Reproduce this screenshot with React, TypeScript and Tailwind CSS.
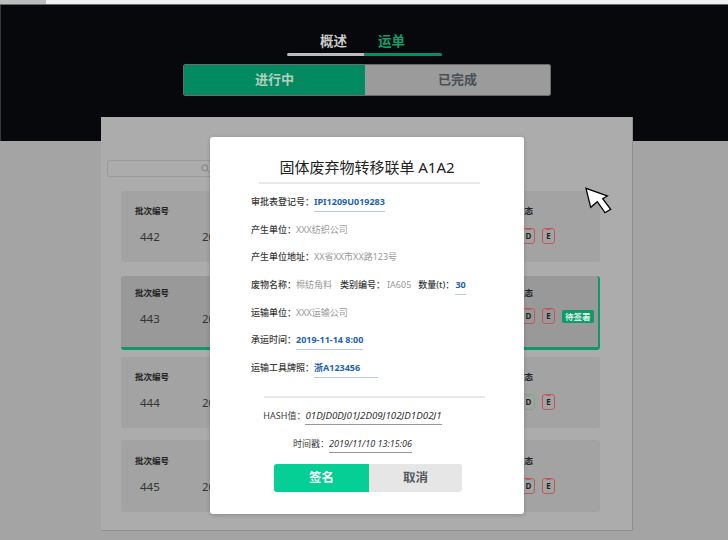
import React from "react";

type BoxProps = { letter: string; color: string };
function ClipBox({ letter, color }: BoxProps) {
  return (
    <div
      className="relative w-[13px] h-[16px] rounded-[3px] border flex items-center justify-center text-[8px] font-bold text-[#222] leading-none"
      style={{ borderColor: color }}
    >
      <span className="absolute -top-[1px] left-[3px] w-[5px] h-[2px] rounded-[1px]" style={{ backgroundColor: color }} />
      {letter}
    </div>
  );
}

type CardProps = {
  num: string;
  active?: boolean;
  labelPt: string;
  numMt: string;
  boxMt: string;
  h: string;
  mt: string;
  dGreen?: boolean;
};

function Card({ num, active, labelPt, numMt, boxMt, h, mt, dGreen }: CardProps) {
  const red = "#c0585a";
  const green = "#7fa982";
  return (
    <div
      className={`${mt} ${h} ml-[20px] w-[479px] rounded-[3px] flex ${
        active ? "bg-[#999999] border-r-2 border-b-[3px] border-[#0c9a69]" : "bg-[#a3a3a3]"
      }`}
    >
      <div className={`w-[81px] pl-[14px] flex flex-col ${labelPt}`}>
        <div className="text-[8.5px] leading-[12px] font-bold text-[#222]">批次编号</div>
        <div className={`${numMt} pl-[5px] text-[11.5px] leading-[14px] text-[#333]`}>{num}</div>
      </div>
      <div className={`w-[260px] flex flex-col ${labelPt}`}>
        <div className="h-[12px]" />
        <div className={`${numMt} text-[11.5px] leading-[14px] text-[#333]`}>2019</div>
      </div>
      <div className={`flex-1 flex flex-col ${labelPt}`}>
        <div className="pl-[54px] text-[8.5px] leading-[12px] font-bold text-[#222]">状态</div>
        <div className={`${boxMt} flex items-center gap-[7px]`}>
          <ClipBox letter="A" color={green} />
          <ClipBox letter="B" color={green} />
          <ClipBox letter="C" color={green} />
          <ClipBox letter="D" color={dGreen ? green : red} />
          <ClipBox letter="E" color={red} />
          {active && (
            <div className="h-[13px] px-[3px] rounded-[2px] bg-[#0e9a69] text-[#d8eee5] text-[8.5px] leading-[13px] font-bold">
              待签署
            </div>
          )}
        </div>
      </div>
    </div>
  );
}

function Row({ children }: { children: React.ReactNode }) {
  return <div className="flex items-start h-[16px] text-[9px] leading-[12px] whitespace-nowrap">{children}</div>;
}

function Label({ children, className = "" }: { children: React.ReactNode; className?: string }) {
  return <span className={`font-medium text-[#3a3a3a] ${className}`}>{children}</span>;
}

function Plain({ children, className = "" }: { children: React.ReactNode; className?: string }) {
  return <span className={`text-[#9a9a9a] ${className}`}>{children}</span>;
}

function Blue({ children }: { children: React.ReactNode }) {
  return (
    <span className="font-bold text-[#1f62ad] pb-[3px] border-b-[1.5px] border-[#b9cbe3] leading-[12px]">{children}</span>
  );
}

export default function App() {
  return (
    <div className="relative w-[728px] h-[540px] overflow-hidden bg-[#a4a4a4] flex flex-col font-['Noto_Sans','Noto_Sans_CJK_SC',sans-serif]">
      {/* top strip */}
      <div className="h-[5px] flex shrink-0 border-b border-[#6b6b6b]">
        <div className="w-[46px] bg-[#bdbdbd]" />
        <div className="flex-1 bg-[#f1f1f1]" />
      </div>

      {/* dark header */}
      <div className="h-[136px] shrink-0 bg-[#07080b] flex flex-col border-l border-[#3a3a3a]">
        <div className="ml-[286px] w-[155px] flex flex-col mt-[27px]">
          <div className="flex pl-[33px] gap-[31px] text-[13.5px] leading-[18px] font-bold">
            <span className="text-[#c9c9c9]">概述</span>
            <span className="text-[#0f9e6e]">运单</span>
          </div>
          <div className="mt-[3px] h-[3px] flex rounded-full overflow-hidden">
            <div className="w-[77px] bg-[#bcbcbc]" />
            <div className="flex-1 bg-[#0a8c63]" />
          </div>
        </div>
        <div className="ml-[182px] mt-[8px] w-[368px] h-[32px] flex rounded-[2px] overflow-hidden border border-[#6a6a6a]">
          <div className="w-[181px] bg-[#038a60] flex items-center justify-center text-[13px] font-bold text-[#b3cfc2]">
            进行中
          </div>
          <div className="flex-1 bg-[#9b9b9b] flex items-center justify-center text-[13px] font-bold text-[#4a5058]">
            已完成
          </div>
        </div>
      </div>

      {/* panel */}
      <div className="relative -mt-[24px] ml-[101px] w-[532px] h-[414px] bg-[#acacac] border-r border-b border-[#8f8f8f] flex flex-col">
        <div className="mt-[43px] ml-[6px] w-[150px] h-[17px] rounded-[3px] border border-[#999] flex items-center">
          <svg className="ml-[93px]" width="9" height="9" viewBox="0 0 10 10" fill="none" stroke="#8a8a8a" strokeWidth="1.2">
            <circle cx="4.2" cy="4.2" r="3.2" />
            <line x1="6.6" y1="6.6" x2="9.2" y2="9.2" />
          </svg>
        </div>
        <Card num="442" labelPt="pt-[14px]" numMt="mt-[13px]" boxMt="mt-[11px]" h="h-[71px]" mt="mt-[14px]" />
        <Card num="443" active labelPt="pt-[11px]" numMt="mt-[13px]" boxMt="mt-[9px]" h="h-[74px]" mt="mt-[14px]" />
        <Card num="444" dGreen labelPt="pt-[14px]" numMt="mt-[13px]" boxMt="mt-[11px]" h="h-[71px]" mt="mt-[7px]" />
        <Card num="445" labelPt="pt-[15px]" numMt="mt-[13px]" boxMt="mt-[11px]" h="h-[72px]" mt="mt-[12px]" />
      </div>

      {/* modal */}
      <div className="absolute left-[210px] top-[137px] w-[314px] h-[377px] bg-white rounded-[3px] shadow-[0_1px_4px_rgba(0,0,0,0.2)] flex flex-col">
        <div className="pt-[20px] text-center text-[15px] leading-[20px] text-[#222]">固体废弃物转移联单 A1A2</div>
        <div className="mt-[5px] ml-[49px] w-[221px] h-[2px] bg-[#e9e9e9]" />
        <div className="ml-[41px] mt-[12px] flex flex-col gap-[11.7px]">
          <Row>
            <Label>审批表登记号：</Label>
            <Blue>IPI1209U019283</Blue>
          </Row>
          <Row>
            <Label>产生单位：</Label>
            <Plain>XXX纺织公司</Plain>
          </Row>
          <Row>
            <Label>产生单位地址：</Label>
            <Plain>XX省XX市XX路123号</Plain>
          </Row>
          <Row>
            <Label>废物名称：</Label>
            <Plain>棉纺角料</Plain>
            <Label className="ml-[8px]">类别编号：</Label>
            <Plain className="ml-[2px]">IA605</Plain>
            <Label className="ml-[7px]">数量(t)：</Label>
            <span className="ml-[1px]">
              <Blue>30</Blue>
            </span>
          </Row>
          <Row>
            <Label>运输单位：</Label>
            <Plain>XXX运输公司</Plain>
          </Row>
          <Row>
            <Label>承运时间：</Label>
            <Blue>2019-11-14 8:00</Blue>
          </Row>
          <Row>
            <Label>运输工具牌照：</Label>
            <span className="font-bold text-[#1f62ad] pb-[3px] pr-[18px] border-b-[1.5px] border-[#b9cbe3] leading-[12px]">
              浙A123456
            </span>
          </Row>
        </div>
        <div className="mt-[18px] ml-[54px] w-[221px] h-[2px] bg-[#e9e9e9]" />
        <div className="ml-[48px] w-[189px] flex flex-col items-center">
          <div className="mt-[12px] flex items-start text-[9px] leading-[12px] whitespace-nowrap">
            <span className="text-[#3a3a3a]">HASH值：</span>
            <span className="italic text-[9.8px] text-[#333] pb-[2px] border-b border-[#999]">01DJD0DJ01J2D09J102JD1D02J1</span>
          </div>
          <div className="mt-[13px] flex items-start text-[9px] leading-[12px] whitespace-nowrap">
            <span className="text-[#3a3a3a]">时间戳：</span>
            <span className="italic text-[#333] pb-[2px] border-b border-[#999]">2019/11/10 13:15:06</span>
          </div>
        </div>
        <div className="mt-[11px] ml-[64px] w-[188px] h-[28px] flex rounded-[3px] overflow-hidden">
          <div className="w-[95px] bg-[#05cf94] flex items-center justify-center text-white text-[12.5px] font-bold">签名</div>
          <div className="flex-1 bg-[#e6e6e6] flex items-center justify-center text-[#555b61] text-[12.5px] font-bold">取消</div>
        </div>
      </div>

      {/* mouse cursor */}
      <svg className="absolute left-[580px] top-[182px]" width="36" height="36" viewBox="0 0 36 36">
        <polygon
          points="6,6.3 10.7,25.3 17.3,19.7 25,30.7 30.7,27.3 22.7,16.7 27.3,14"
          fill="#ffffff"
          stroke="#000000"
          strokeWidth="1.3"
          strokeLinejoin="miter"
        />
      </svg>
    </div>
  );
}
